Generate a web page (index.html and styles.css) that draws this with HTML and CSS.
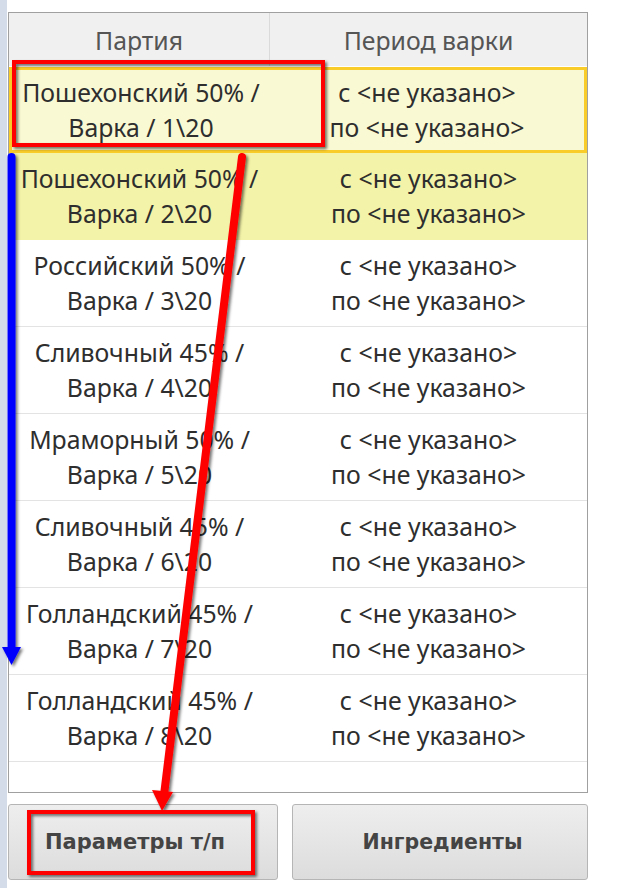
FILE: index.html
```html
<!DOCTYPE html>
<html lang="ru">
<head>
<meta charset="utf-8">
<link rel="stylesheet" href="styles.css">
</head>
<body>
<div class="page">
  <div class="strip"></div>
  <div class="main">
    <div class="grid">
      <div class="head">
        <div class="hcell">Партия</div>
        <div class="hcell last">Период варки</div>
      </div>
      <div class="row selected">
        <div class="cell">Пошехонский 50% /<br>Варка / 1\20</div>
        <div class="cell">с &lt;не указано&gt;<br>по &lt;не указано&gt;</div>
      </div>
      <div class="row alt">
        <div class="cell">Пошехонский 50% /<br>Варка / 2\20</div>
        <div class="cell">с &lt;не указано&gt;<br>по &lt;не указано&gt;</div>
      </div>
      <div class="row">
        <div class="cell">Российский 50% /<br>Варка / 3\20</div>
        <div class="cell">с &lt;не указано&gt;<br>по &lt;не указано&gt;</div>
      </div>
      <div class="row">
        <div class="cell">Сливочный 45% /<br>Варка / 4\20</div>
        <div class="cell">с &lt;не указано&gt;<br>по &lt;не указано&gt;</div>
      </div>
      <div class="row">
        <div class="cell">Мраморный 50% /<br>Варка / 5\20</div>
        <div class="cell">с &lt;не указано&gt;<br>по &lt;не указано&gt;</div>
      </div>
      <div class="row">
        <div class="cell">Сливочный 45% /<br>Варка / 6\20</div>
        <div class="cell">с &lt;не указано&gt;<br>по &lt;не указано&gt;</div>
      </div>
      <div class="row">
        <div class="cell">Голландский 45% /<br>Варка / 7\20</div>
        <div class="cell">с &lt;не указано&gt;<br>по &lt;не указано&gt;</div>
      </div>
      <div class="row">
        <div class="cell">Голландский 45% /<br>Варка / 8\20</div>
        <div class="cell">с &lt;не указано&gt;<br>по &lt;не указано&gt;</div>
      </div>
    </div>
    <div class="buttons">
      <button class="btn btn-left">Параметры т/п</button>
      <button class="btn btn-right">Ингредиенты</button>
    </div>
  </div>
</div>
<svg class="overlay" width="633" height="888" viewBox="0 0 633 888">
  <defs>
    <filter id="sh" x="-20%" y="-20%" width="140%" height="140%">
      <feDropShadow dx="2" dy="2" stdDeviation="1.5" flood-color="#000" flood-opacity="0.55"/>
    </filter>
  </defs>
  <g filter="url(#sh)">
    <rect x="14" y="62" width="309" height="83" fill="none" stroke="#ff0000" stroke-width="4"/>
    <rect x="29" y="812" width="224" height="61" fill="none" stroke="#ff0000" stroke-width="4"/>
    <line x1="242" y1="157" x2="164" y2="795" stroke="#ff0000" stroke-width="8" stroke-linecap="round"/>
    <polygon points="152,790 173,792 162,811" fill="#ff0000"/>
    <line x1="11.5" y1="157" x2="11.5" y2="650" stroke="#0000ff" stroke-width="8" stroke-linecap="round"/>
    <polygon points="2,647 21,647 11.5,665" fill="#0000ff"/>
  </g>
</svg>
</body>
</html>
```
FILE: styles.css
```css
html, body {
  margin: 0;
  padding: 0;
  background: #ffffff;
}
.page {
  display: flex;
  width: 633px;
  height: 888px;
}
.strip {
  width: 7px;
  background: #d4dbe9;
  flex: none;
}
.main {
  margin-left: 1px;
  padding-top: 12px;
  width: 580px;
  display: flex;
  flex-direction: column;
}
.grid {
  box-sizing: border-box;
  width: 580px;
  height: 781px;
  border: 1px solid #a0a0a0;
  background: #fff;
  font-family: "Noto Sans", "Open Sans", sans-serif;
  font-size: 24.8px;
}
.head {
  display: grid;
  grid-template-columns: 261px 1fr;
  height: 53px;
  background: #f0f0f0;
  border-bottom: 1px solid #ffffff;
}
.hcell {
  display: flex;
  align-items: center;
  justify-content: center;
  color: #555555;
  border-right: 1px solid #dadada;
}
.hcell.last {
  border-right: none;
}
.row {
  box-sizing: border-box;
  display: grid;
  grid-template-columns: 261px 1fr;
  height: 87px;
  border-bottom: 1px solid #e3e3e3;
}
.row.selected {
  background: #f9f9d3;
  border: 3px solid #f9cc2a;
  grid-template-columns: 258px 1fr;
  height: 86px;
}
.row.alt {
  background: #f3f3a9;
  border-bottom-color: #f3f3a9;
}
.cell {
  display: flex;
  align-items: center;
  justify-content: center;
  text-align: center;
  line-height: 35px;
  color: #2e2e2e;
}
.buttons {
  display: flex;
  gap: 14px;
  margin-top: 11px;
}
.btn {
  height: 76px;
  border: 1px solid #b5b5b5;
  border-radius: 3px;
  background: linear-gradient(#eeeeee, #dcdcdc);
  font-family: "DejaVu Sans", sans-serif;
  font-weight: bold;
  font-size: 21px;
  color: #444444;
  padding: 0;
}
.btn-left {
  width: 270px;
  padding-right: 16px;
}
.btn-right {
  width: 296px;
  padding-left: 5px;
  font-size: 20.5px;
}
.overlay {
  position: absolute;
  left: 0;
  top: 0;
  pointer-events: none;
}
```
